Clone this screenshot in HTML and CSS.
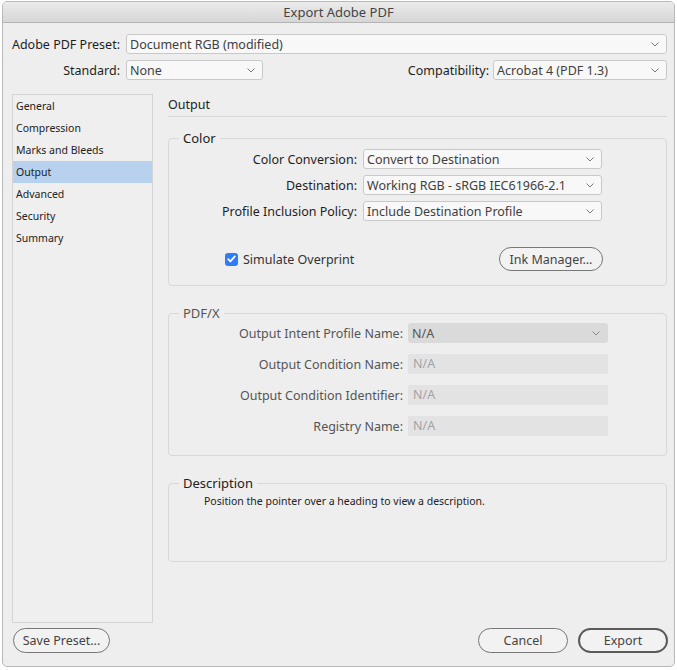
FILE: index.html
```html
<!DOCTYPE html>
<html>
<head>
<meta charset="utf-8">
<link rel="stylesheet" href="styles.css">
</head>
<body>
<div class="window">
  <div class="titlebar">Export Adobe PDF</div>
  <div class="content">
    <div class="top-row">
      <span class="top-label">Adobe PDF Preset:</span>
      <div class="select grow"><span>Document RGB (modified)</span><svg class="chev" width="8" height="5" viewBox="0 0 8 5"><polyline points="0.5,0.5 4,4 7.5,0.5" fill="none" stroke="#7a7a7a" stroke-width="1"/></svg></div>
    </div>
    <div class="top-row second">
      <span class="top-label">Standard:</span>
      <div class="select std"><span>None</span><svg class="chev" width="8" height="5" viewBox="0 0 8 5"><polyline points="0.5,0.5 4,4 7.5,0.5" fill="none" stroke="#7a7a7a" stroke-width="1"/></svg></div>
      <span class="spacer"></span>
      <span class="compat-label">Compatibility:</span>
      <div class="select compat"><span>Acrobat 4 (PDF 1.3)</span><svg class="chev" width="8" height="5" viewBox="0 0 8 5"><polyline points="0.5,0.5 4,4 7.5,0.5" fill="none" stroke="#7a7a7a" stroke-width="1"/></svg></div>
    </div>

    <div class="main">
      <ul class="nav">
        <li>General</li>
        <li>Compression</li>
        <li>Marks and Bleeds</li>
        <li class="active">Output</li>
        <li>Advanced</li>
        <li>Security</li>
        <li>Summary</li>
      </ul>
      <div class="panel">
        <div class="panel-title">Output</div>

        <fieldset class="group color">
          <legend>Color</legend>
          <div class="form color-form">
            <label>Color Conversion:</label>
            <div class="select"><span>Convert to Destination</span><svg class="chev" width="8" height="5" viewBox="0 0 8 5"><polyline points="0.5,0.5 4,4 7.5,0.5" fill="none" stroke="#7a7a7a" stroke-width="1"/></svg></div>
            <label>Destination:</label>
            <div class="select"><span>Working RGB - sRGB IEC61966-2.1</span><svg class="chev" width="8" height="5" viewBox="0 0 8 5"><polyline points="0.5,0.5 4,4 7.5,0.5" fill="none" stroke="#7a7a7a" stroke-width="1"/></svg></div>
            <label>Profile Inclusion Policy:</label>
            <div class="select"><span>Include Destination Profile</span><svg class="chev" width="8" height="5" viewBox="0 0 8 5"><polyline points="0.5,0.5 4,4 7.5,0.5" fill="none" stroke="#7a7a7a" stroke-width="1"/></svg></div>
          </div>
          <div class="check-row">
            <span class="check-wrap">
              <span class="checkbox"><svg width="9" height="8" viewBox="0 0 9 8"><polyline points="1.2,4.2 3.4,6.3 7.8,1.4" fill="none" stroke="#ffffff" stroke-width="1.8" stroke-linecap="round" stroke-linejoin="round"/></svg></span>
              <span class="check-label">Simulate Overprint</span>
            </span>
            <span class="btn ink">Ink Manager...</span>
          </div>
        </fieldset>

        <fieldset class="group pdfx">
          <legend>PDF/X</legend>
          <div class="form pdfx-form">
            <label>Output Intent Profile Name:</label>
            <div class="select disabled-select"><span>N/A</span><svg class="chev" width="8" height="5" viewBox="0 0 8 5"><polyline points="0.5,0.5 4,4 7.5,0.5" fill="none" stroke="#8a8a8a" stroke-width="1"/></svg></div>
            <label>Output Condition Name:</label>
            <div class="field">N/A</div>
            <label>Output Condition Identifier:</label>
            <div class="field">N/A</div>
            <label>Registry Name:</label>
            <div class="field">N/A</div>
          </div>
        </fieldset>

        <fieldset class="group desc">
          <legend>Description</legend>
          <p class="desc-text">Position the pointer over a heading to view a description.</p>
        </fieldset>
      </div>
    </div>

    <div class="footer">
      <span class="btn save">Save Preset...</span>
      <span class="spacer"></span>
      <span class="btn cancel">Cancel</span>
      <span class="btn export">Export</span>
    </div>
  </div>
</div>
</body>
</html>
```

FILE: styles.css
```css
* { box-sizing: border-box; }

html, body {
  margin: 0;
  padding: 0;
  background: #ffffff;
}

body {
  font-family: "Noto Sans", "DejaVu Sans", sans-serif;
  color: #222;
  font-size: 12.5px;
}

.window {
  margin: 1px 2px 0 2px;
  height: 666px;
  border: 1px solid #b9b9b9;
  border-radius: 5px;
  background: #eeeeee;
  overflow: hidden;
  display: flex;
  flex-direction: column;
}

.titlebar {
  height: 21px;
  flex: none;
  background: linear-gradient(#ebebeb, #d6d6d6);
  border-bottom: 1px solid #b4b4b4;
  text-align: center;
  font-size: 13px;
  line-height: 20px;
  color: #444;
}

.content {
  flex: 1;
  display: flex;
  flex-direction: column;
  padding: 11px 7px 13px 9px;
}

.top-row {
  display: flex;
  align-items: center;
  height: 20px;
}

.top-row.second {
  margin-top: 6px;
}

.top-label {
  width: 108px;
  display: flex;
  justify-content: flex-end;
  white-space: nowrap;
  margin-right: 6px;
  flex: none;
  color: #1e1e1e;
}

.compat-label {
  margin-right: 4px;
  color: #1e1e1e;
  white-space: nowrap;
}

.spacer { flex: 1; }

.select {
  height: 20px;
  border: 1px solid #c8c8c8;
  border-radius: 3px;
  background: #f8f8f8;
  display: flex;
  align-items: center;
  justify-content: space-between;
  padding: 0 7px 0 3px;
  color: #404040;
  white-space: nowrap;
}

.select .chev { flex: none; }

.select.grow { flex: 1; }
.select.std { width: 137px; }
.select.compat { width: 174px; }

.main {
  flex: 1;
  display: flex;
  margin-top: 14px;
  gap: 15px;
}

.nav {
  list-style: none;
  margin: 0;
  padding: 0;
  width: 141px;
  flex: none;
  border: 1px solid #d4d4d4;
  background: #efefef;
  font-size: 10.5px;
}

.nav li {
  height: 22px;
  line-height: 22px;
  padding-left: 3px;
  color: #222;
}

.nav li.active {
  background: #b7d1ee;
}

.panel {
  flex: 1;
  display: flex;
  flex-direction: column;
}

.panel-title {
  height: 23px;
  line-height: 22px;
  border-bottom: 1px solid #d6d6d6;
  font-size: 12.5px;
  color: #222;
}

.group {
  margin: 0;
  padding: 0;
  border: 1px solid #d8d8d8;
  border-radius: 4px;
  min-width: 0;
}

.group legend {
  margin-left: 10px;
  padding: 0 4px;
  font-size: 13px;
  line-height: 16px;
  color: #222;
}

.group.color { margin-top: 13px; padding: 3px 0 14px 0; }
.group.pdfx { margin-top: 19px; padding: 2px 0 19px 0; }
.group.desc { margin-top: 19px; padding: 2px 0 52px 0; }

.group.pdfx legend { color: #555; }

.form {
  display: grid;
  align-items: center;
}

.form label {
  text-align: right;
  white-space: nowrap;
}

.color-form {
  grid-template-columns: 188px 239px;
  column-gap: 6px;
  row-gap: 6px;
  grid-auto-rows: 20px;
}

.color-form label { color: #1e1e1e; }

.check-row {
  width: 434px;
  margin-top: 26px;
  height: 24px;
  display: flex;
  align-items: center;
  justify-content: space-between;
  padding-left: 56px;
}

.check-wrap {
  display: flex;
  align-items: center;
}

.checkbox {
  width: 13px;
  height: 13px;
  border-radius: 3px;
  background: #2e7df6;
  display: flex;
  align-items: center;
  justify-content: center;
  margin-right: 5px;
}

.check-label { color: #333; }

.btn {
  display: flex;
  align-items: center;
  justify-content: center;
  height: 25px;
  border: 1px solid #767676;
  border-radius: 13px;
  background: #f2f2f2;
  color: #444;
  font-size: 12.5px;
  white-space: nowrap;
}

.btn.ink { width: 104px; height: 24px; }

.pdfx-form {
  grid-template-columns: 234px 200px;
  column-gap: 5px;
  row-gap: 11px;
  grid-auto-rows: 20px;
}

.pdfx-form label { color: #555; }

.disabled-select {
  background: #dadada;
  border-color: #dadada;
  color: #555;
}

.field {
  height: 20px;
  background: #e3e3e3;
  color: #a3a3a3;
  padding-left: 5px;
  line-height: 20px;
  border-radius: 1px;
}

.desc-text {
  margin: 0;
  padding-left: 35px;
  font-size: 10.5px;
  line-height: 16px;
  color: #222;
}

.footer {
  display: flex;
  margin-top: 5px;
  height: 25px;
  flex: none;
  gap: 10px;
  margin-right: -1px;
  padding-left: 1px;
}

.btn.save { width: 97px; }
.btn.cancel { width: 90px; }
.btn.export { width: 90px; border: 2px solid #5a5a5a; }
```
